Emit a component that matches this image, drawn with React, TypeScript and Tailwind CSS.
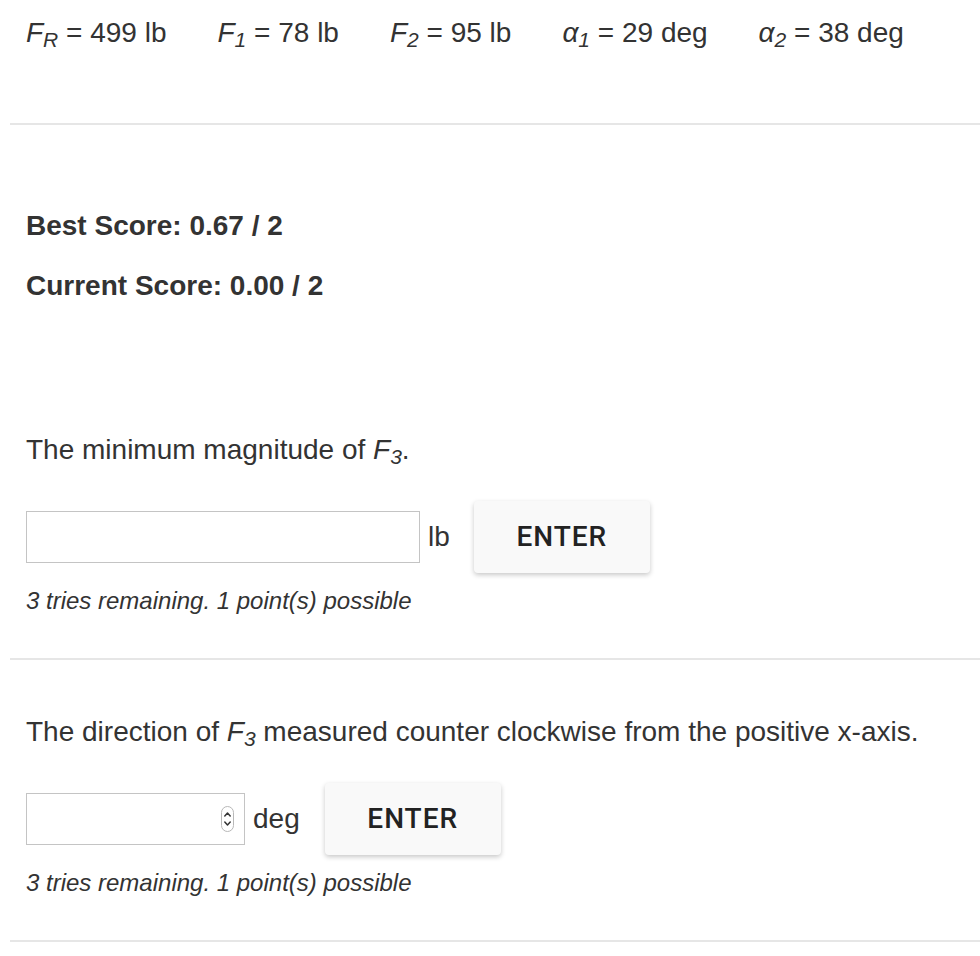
import type { ReactNode } from 'react';

const F = ({ sub }: { sub: string }) => (
  <span className="italic">
    F<sub>{sub}</sub>
  </span>
);

const A = ({ sub }: { sub: string }) => (
  <span className="italic">
    α<sub>{sub}</sub>
  </span>
);

function Given() {
  const items: { sym: ReactNode; value: string }[] = [
    { sym: <F sub="R" />, value: '499 lb' },
    { sym: <F sub="1" />, value: '78 lb' },
    { sym: <F sub="2" />, value: '95 lb' },
    { sym: <A sub="1" />, value: '29 deg' },
    { sym: <A sub="2" />, value: '38 deg' },
  ];
  return (
    <div className="flex gap-[51px] pl-4 pt-4 text-[28px] leading-[34px]">
      {items.map((it, i) => (
        <span key={i} className="whitespace-nowrap">
          {it.sym} = {it.value}
        </span>
      ))}
    </div>
  );
}

function Spinner() {
  return (
    <div className="flex h-[26px] w-[13px] items-center justify-center rounded-full border border-[#b8b8b8] bg-white">
      <svg width="9" height="22" viewBox="0 0 9 22" fill="none" stroke="#333" strokeWidth="1.5" strokeLinecap="round" strokeLinejoin="round">
        <path d="M1.8 8 L4.5 5 L7.2 8" />
        <path d="M1.8 14 L4.5 17 L7.2 14" />
      </svg>
    </div>
  );
}

function EnterButton() {
  return (
    <button className="h-[72px] w-[176px] rounded-[4px] bg-[#f9f9f9] font-['Roboto',sans-serif] text-[28px] font-medium tracking-[1px] text-[#222] shadow-[0_2px_5px_rgba(0,0,0,0.22)]">
      ENTER
    </button>
  );
}

function Question({
  prompt,
  unit,
  inputWidth,
  spinner,
}: {
  prompt: ReactNode;
  unit: string;
  inputWidth: string;
  spinner?: boolean;
}) {
  return (
    <div className="pl-4">
      <p className="text-[28px] leading-[34px]">{prompt}</p>
      <div className="mt-[34px] flex h-[72px] items-center">
        <div className={`flex h-[52px] items-center justify-end border border-[#c4c4c4] bg-white pr-[10px] ${inputWidth}`}>
          {spinner && <Spinner />}
        </div>
        <span className="ml-[8px] text-[28px]">{unit}</span>
        <div className={unit === 'lb' ? 'ml-[24px]' : 'ml-[25px]'}>
          <EnterButton />
        </div>
      </div>
      <p className="mt-[14px] text-[24px] italic leading-[28px]">3 tries remaining. 1 point(s) possible</p>
    </div>
  );
}

export default function App() {
  return (
    <div className="min-h-[956px] bg-white pl-[10px] font-['Liberation_Sans',Arial,sans-serif] text-[#333]">
      <Given />
      <div className="mt-[73px] h-[2px] bg-[#e6e6e6]" />

      <div className="mt-[84px] pl-4 text-[28px] font-bold leading-[34px]">
        <p>Best Score: 0.67 / 2</p>
        <p className="mt-[26px]">Current Score: 0.00 / 2</p>
      </div>

      <div className="mt-[130px]">
        <Question
          prompt={
            <>
              The minimum magnitude of <F sub="3" />.
            </>
          }
          unit="lb"
          inputWidth="w-[394px]"
        />
      </div>
      <div className="mt-[43px] h-[2px] bg-[#e6e6e6]" />

      <div className="mt-[55px]">
        <Question
          prompt={
            <>
              The direction of <F sub="3" /> measured counter clockwise from the positive x-axis.
            </>
          }
          unit="deg"
          inputWidth="w-[219px]"
          spinner
        />
      </div>
      <div className="mt-[43px] h-[2px] bg-[#e6e6e6]" />
    </div>
  );
}
